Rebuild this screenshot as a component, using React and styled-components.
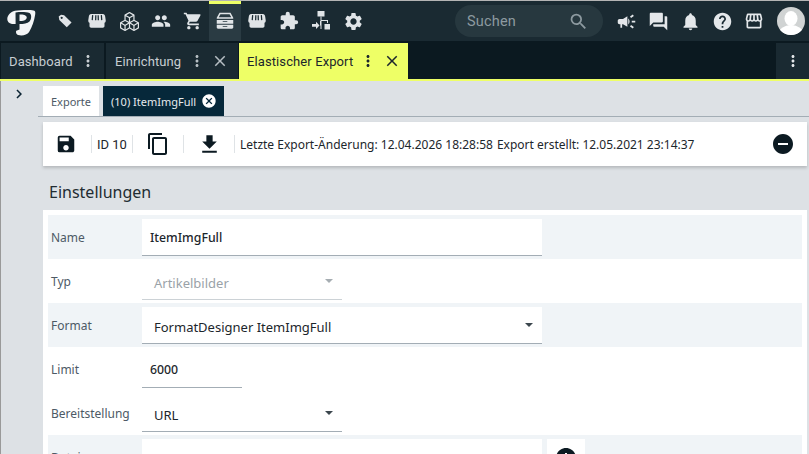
import React from "react";
import styled, { createGlobalStyle } from "styled-components";
import {
  MdPeople, MdShoppingCart, MdExtension, MdSettings, MdCampaign, MdForum,
  MdNotifications, MdHelp, MdStorefront, MdSave, MdContentCopy, MdFileDownload, MdRemoveCircle,
  MdMoreVert, MdClose, MdCancel, MdSearch, MdChevronRight, MdInfo,
} from "react-icons/md";
import { BsBoxes } from "react-icons/bs";

const Global = createGlobalStyle`
  html, body { margin: 0; padding: 0; background: #dde1e5; }
  * { box-sizing: border-box; }
`;
const Page = styled.div`
  width: 809px; height: 454px; overflow: hidden; display: flex; flex-direction: column;
  border-top: 1px solid #b4b4b4; background: #dde1e5;
  font-family: "Noto Sans", sans-serif; color: #1c262c;
`;
const TopBar = styled.header`
  height: 40px; flex: none; display: flex; align-items: stretch; background: #1a2a32; padding-left: 7px;
`;
const Logo = styled.div`width: 29px; display: flex; align-items: center; margin-right: 13px;`;
const NavIcons = styled.nav`display: flex; align-items: stretch;`;
const NavItem = styled.div`
  width: 32px; display: flex; align-items: center; justify-content: center; color: #e0e4e7;
  background: ${(p) => (p.$active ? "#2a3b43" : "transparent")};
  border-top: 3px solid ${(p) => (p.$active ? "#eeff66" : "transparent")};
  padding-bottom: 3px;
`;
const Search = styled.div`
  width: 148px; height: 32px; margin: 4px 7px 0 auto; border-radius: 16px; background: #27383f;
  display: flex; align-items: center; justify-content: space-between; padding: 0 14px 0 12px;
  font-family: "Roboto", sans-serif; font-size: 14.5px; color: #8d9aa0; letter-spacing: .2px;
`;
const RightIcons = styled.div`display: flex; align-items: center; padding-right: 4px;`;
const RightIcon = styled.div`
  width: 32px; height: 32px; display: flex; align-items: center; justify-content: center; color: #e4e7ea;
`;
const Avatar = styled.div`
  width: 28px; height: 28px; margin-left: 7px; display: flex;
`;
const TabBar = styled.div`
  height: 40px; flex: none; display: flex; background: #0b1920; padding-top: 2px; border-bottom: 2px solid #eeff66;
`;
const Tab = styled.div`
  display: flex; align-items: center; width: ${(p) => p.$w}px; margin-left: ${(p) => p.$ml || 0}px; padding-left: ${(p) => p.$pl}px;
  background: ${(p) => (p.$active ? "#eeff66" : "#1a2a32")};
  color: ${(p) => (p.$active ? "#1c262c" : "#c8ced2")};
  font-family: "Roboto", sans-serif; font-size: 13px; letter-spacing: .1px;
`;
const TabText = styled.span`width: ${(p) => p.$w}px; flex: none; white-space: nowrap;`;
const TabIcons = styled.span`display: flex; align-items: center; gap: ${(p) => p.$gap || 0}px; color: ${(p) => p.$color || "inherit"};`;
const TabEnd = styled.div`
  width: 33px; margin-left: auto; background: #1a2a32; color: #e4e7ea; display: flex; align-items: center; justify-content: center;
`;
const Body = styled.div`flex: 1; min-height: 0; display: flex; border-left: 1px solid #999;`;
const Sidebar = styled.aside`
  width: 37px; flex: none; display: flex; justify-content: center; padding: 4px 2px 0 0; color: #0b2433;
`;
const Main = styled.main`flex: 1; min-width: 0; display: flex; flex-direction: column;`;
const SubTabs = styled.div`
  display: flex; gap: 4px; padding: 5px 0 0 5px; border-bottom: 1px solid #a3adb5; height: 36px; flex: none;
`;
const SubTab = styled.div`
  height: 30px; display: flex; align-items: center; justify-content: ${(p) => (p.$active ? "flex-start" : "center")};
  width: ${(p) => p.$w}px; padding-left: ${(p) => (p.$active ? 8 : 0)}px; gap: 5px;
  background: ${(p) => (p.$active ? "#06283a" : "#fff")};
  color: ${(p) => (p.$active ? "#e6ebee" : "#4d5a66")};
  font-size: 11px;
`;
const Toolbar = styled.div`
  height: 44px; flex: none; margin: 5px 2px 0 5px; background: #fff; box-shadow: 0 2px 3px rgba(0,0,0,.18);
  display: flex; align-items: center; font-size: 12px;
`;
const ToolIcon = styled.div`
  width: ${(p) => p.$w}px; height: 24px; flex: none; display: flex; align-items: center; justify-content: center;
  color: #0c1a22; padding-right: ${(p) => p.$shift || 0}px;
`;
const Sep = styled.span`width: 1px; height: 18px; background: #dfe3e6; flex: none;`;
const IdText = styled.span`width: 40px; flex: none; padding-left: 5px; font-family: "Roboto", sans-serif; font-size: 13px;`;
const Info = styled.span`white-space: nowrap; margin-left: ${(p) => p.$ml}px;`;
const EndIcon = styled.div`margin-left: auto; margin-right: 12px; display: flex; color: #0c1a22;`;
const Heading = styled.h2`
  height: 44px; flex: none; margin: 0 0 0 11px; font-size: 16px; font-weight: 400; line-height: 52px; color: #222c32;
`;
const Card = styled.section`margin: 0 2px 0 5px; padding: 5px; background: #fff; flex: none;`;
const Row = styled.div`
  height: 44px; display: flex; align-items: flex-start; background: ${(p) => (p.$band ? "#f0f4f7" : "#fff")};
`;
const Label = styled.label`
  width: 94px; height: 44px; flex: none; padding-left: 3px; display: flex; align-items: center; font-size: 12px; color: #4d5a66;
`;
const Field = styled.div`
  position: relative; width: ${(p) => p.$w}px; height: 37px; margin-top: 4px; background: #fff; flex: none;
  border-bottom: 1px solid ${(p) => (p.$muted ? "#ccd2d6" : "#a3adb5")};
  display: flex; align-items: center; padding: ${(p) => (p.$select ? "4px 0 0 12px" : "0 0 0 8px")};
  font-size: ${(p) => (p.$medium ? 12.3 : 13)}px; font-weight: ${(p) => (p.$medium ? 500 : 400)};
  color: ${(p) => (p.$muted ? "#9aa2a8" : "#1c262c")};
`;
const Caret = styled.span`
  position: absolute; right: 9px; top: 16px; width: 0; height: 0;
  border-left: 4px solid transparent; border-right: 4px solid transparent;
  border-top: 4px solid ${(p) => (p.$muted ? "#a6adb2" : "#3c474e")};
`;
const SquareBtn = styled.div`
  width: 38px; height: 37px; margin: 4px 0 0 5px; background: #fff; display: flex; align-items: center; justify-content: center; color: #0c1a22;
`;

const LogoMark = () => (
  <svg width="29" height="26" viewBox="0 0 29 26" style={{ marginTop: 4 }}>
    <path fill="#f4f5f6" fillRule="evenodd" d="M8 .8C13 .1 22-.3 26.500.4c2 .3 2 2 1.600 4.600-.8 5.500-3 12-6 17-2 3-7 4.200-11 3-1.800-.6-2.300-2-2-4l.3-7C5 14.500 1.500 13.500.5 10.500-.5 7 2.500 2 8 .8Z" />
    <path fill="#1a2a32" fillRule="evenodd" d="M8.500 2.500C13 1.800 19 1.800 22.500 3c2.500 1.500 2 6.500 0 8.500-2 2.200-6 2.500-10 2.500v5.500L8.700 21ZM12.500 4.500V11c3.500 0 6.500-.5 7.200-3 .6-2.700-3.400-4-7.200-3.500Z" />
  </svg>
);
const Tag = () => (
  <svg width="14" height="14" viewBox="0 0 16 16" fill="#e0e4e7">
    <path fillRule="evenodd" d="M.8 2.800 3.500.8 7 1.300 15.500 9.800 10 15.200 1.500 6.800ZM4.200 3a1.300 1.300 0 1 0 .01 0Z" />
  </svg>
);
const Shop = () => (
  <svg width="20" height="20" viewBox="0 0 24 24" fill="#e0e4e7">
    <path d="M5 3.500h14c1.600 0 2.600 1.400 2.800 3l.7 5c0 1.500-.4 2.200-1.500 2.700V18c0 1.200-.9 2-2 2H5c-1.100 0-2-.8-2-2v-3.800c-1.100-.5-1.500-1.200-1.500-2.700l.7-5C2.400 4.900 3.400 3.500 5 3.500Z" />
    <path d="M6.800 5 6.300 11M10.600 5l-.2 6M13.400 5l.2 6M17.200 5l.5 6" stroke="#1a2a32" strokeWidth="1.500" fill="none" />
  </svg>
);
const Drawers = () => (
  <svg width="22" height="22" viewBox="0 0 24 24" fill="#e0e4e7">
    <path d="M6 3h12l3 5.500v1H3v-1L6 3Zm1 1.600L5.200 8h13.600L17 4.600H7Z" />
    <path fillRule="evenodd" d="M3 11h18v4H3v-4Zm6.500 1.200v1h5v-1h-5ZM3 16h18v3.200c0 .8-.6 1.300-1.300 1.300H4.300c-.7 0-1.300-.5-1.300-1.300V16Zm6.500 1.400v1h5v-1h-5Z" />
  </svg>
);
const Sitemap = () => (
  <svg width="24" height="24" viewBox="0 0 24 24" fill="#e0e4e7">
    <rect x="8.500" y="2" width="7" height="5.500" />
    <path d="M11.500 7.500h1V11H19v3h-1v-2H12.500v8h-1v-3.500H11V12h.5Z" />
    <rect x="15.500" y="15" width="5.500" height="5.500" />
    <path d="M3 15h4v-2.200l3.500 3.700L7 20v-2.200H3Z" />
  </svg>
);
const AvatarMark = () => (
  <svg width="28" height="28" viewBox="0 0 28 28">
    <circle cx="14" cy="14" r="14" fill="#d0d3d3" />
    <clipPath id="avatar-clip"><circle cx="14" cy="14" r="14" /></clipPath>
    <g clipPath="url(#avatar-clip)" fill="#fff">
      <ellipse cx="14" cy="11.500" rx="6.500" ry="7.500" />
      <ellipse cx="14" cy="27" rx="12.500" ry="9" />
    </g>
  </svg>
);

const Row2 = ({ band, label, children }) => (
  <Row $band={band}>
    <Label>{label}</Label>
    {children}
  </Row>
);

export default function App() {
  return (
    <Page>
      <Global />
      <TopBar>
        <Logo><LogoMark /></Logo>
        <NavIcons>
          <NavItem><Tag /></NavItem>
          <NavItem><Shop /></NavItem>
          <NavItem><BsBoxes size={19} /></NavItem>
          <NavItem><MdPeople size={20} /></NavItem>
          <NavItem><MdShoppingCart size={20} /></NavItem>
          <NavItem $active><Drawers /></NavItem>
          <NavItem><Shop /></NavItem>
          <NavItem><MdExtension size={20} /></NavItem>
          <NavItem><Sitemap /></NavItem>
          <NavItem><MdSettings size={21} /></NavItem>
        </NavIcons>
        <Search>
          <span>Suchen</span>
          <MdSearch size={21} />
        </Search>
        <RightIcons>
          <RightIcon><MdCampaign size={21} /></RightIcon>
          <RightIcon><MdForum size={21} /></RightIcon>
          <RightIcon><MdNotifications size={21} /></RightIcon>
          <RightIcon><MdHelp size={21} /></RightIcon>
          <RightIcon><MdStorefront size={20} /></RightIcon>
          <Avatar><AvatarMark /></Avatar>
        </RightIcons>
      </TopBar>
      <TabBar>
        <Tab $w={103} $pl={8} $ml={1}>
          <TabText $w={70}>Dashboard</TabText>
          <TabIcons><MdMoreVert size={18} /></TabIcons>
        </Tab>
        <Tab $w={132} $pl={9} $ml={2}>
          <TabText $w={73}>Einrichtung</TabText>
          <TabIcons $gap={5} $color="#b6bec3"><MdMoreVert size={18} /><MdClose size={18} /></TabIcons>
        </Tab>
        <Tab $w={169} $pl={8} $ml={1} $active>
          <TabText $w={112}>Elastischer Export</TabText>
          <TabIcons $gap={6}><MdMoreVert size={18} /><MdClose size={18} /></TabIcons>
        </Tab>
        <TabEnd><MdMoreVert size={18} /></TabEnd>
      </TabBar>
      <Body>
        <Sidebar><MdChevronRight size={18} /></Sidebar>
        <Main>
          <SubTabs>
            <SubTab $w={56}>Exporte</SubTab>
            <SubTab $w={121} $active>
              (10) ItemImgFull
              <MdCancel size={16} color="#fff" />
            </SubTab>
          </SubTabs>
          <Toolbar>
            <ToolIcon $w={48} $shift={2}><MdSave size={22} /></ToolIcon>
            <Sep />
            <IdText>ID 10</IdText>
            <Sep />
            <ToolIcon $w={50}><MdContentCopy size={24} /></ToolIcon>
            <Sep />
            <ToolIcon $w={50}><MdFileDownload size={25} /></ToolIcon>
            <Sep />
            <Info $ml={5}>Letzte Export-Änderung: 12.04.2026 18:28:58</Info>
            <Info $ml={4}>Export erstellt: 12.05.2021 23:14:37</Info>
            <EndIcon><MdRemoveCircle size={24} /></EndIcon>
          </Toolbar>
          <Heading>Einstellungen</Heading>
          <Card>
            <Row2 band label="Name"><Field $w={400} $medium>ItemImgFull</Field></Row2>
            <Row2 label="Typ"><Field $w={200} $select $muted>Artikelbilder<Caret $muted /></Field></Row2>
            <Row2 band label="Format"><Field $w={400} $select>FormatDesigner ItemImgFull<Caret /></Field></Row2>
            <Row2 label="Limit"><Field $w={100} $medium>6000</Field></Row2>
            <Row2 label="Bereitstellung"><Field $w={200} $select>URL<Caret /></Field></Row2>
            <Row2 band label="Dateien">
              <Field $w={400} />
              <SquareBtn><MdInfo size={24} /></SquareBtn>
            </Row2>
          </Card>
        </Main>
      </Body>
    </Page>
  );
}
